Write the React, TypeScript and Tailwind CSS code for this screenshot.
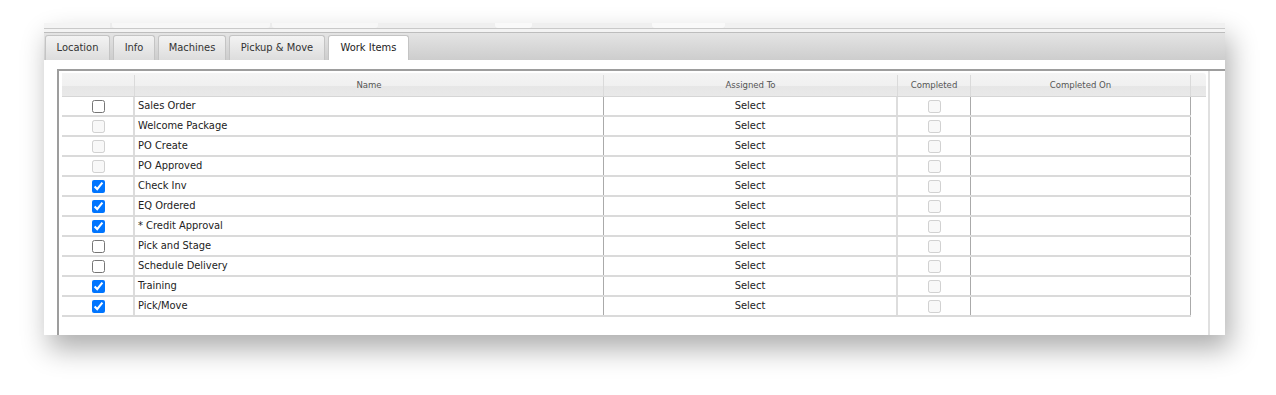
import React from "react";

type Row = { name: string; state: "on" | "off" | "disabled" };

const rows: Row[] = [
  { name: "Sales Order", state: "off" },
  { name: "Welcome Package", state: "disabled" },
  { name: "PO Create", state: "disabled" },
  { name: "PO Approved", state: "disabled" },
  { name: "Check Inv", state: "on" },
  { name: "EQ Ordered", state: "on" },
  { name: "* Credit Approval", state: "on" },
  { name: "Pick and Stage", state: "off" },
  { name: "Schedule Delivery", state: "off" },
  { name: "Training", state: "on" },
  { name: "Pick/Move", state: "on" },
];

const tabs = [
  { label: "Location", w: "w-[65px]" },
  { label: "Info", w: "w-[42px]" },
  { label: "Machines", w: "w-[68px]" },
  { label: "Pickup & Move", w: "w-[96px]" },
];

const App = () => {
  return (
    <div className="w-[1276px] h-[395px] bg-white overflow-hidden pt-[23px] pl-[44px] font-['DejaVu_Sans_Condensed','Liberation_Sans',sans-serif] text-[#222]">
      <div className="w-[1181px] h-[312px] flex flex-col overflow-hidden bg-white shadow-[5px_14px_26px_rgba(0,0,0,0.32)]">
        {/* remnant of the tab row above */}
        <div className="h-[5px] flex bg-[#ececec]">
          <div className="w-[66px] bg-[#f4f4f4]" />
          <div className="w-[2px]" />
          <div className="w-[158px] bg-[#f7f7f7] rounded-b-[3px]" />
          <div className="w-[2px]" />
          <div className="w-[106px] bg-[#f7f7f7] rounded-b-[3px]" />
          <div className="w-[117px] bg-[#efefef]" />
          <div className="w-[37px] bg-[#f9f9f9] rounded-b-[3px]" />
          <div className="w-[120px] bg-[#efefef]" />
          <div className="w-[73px] bg-[#f9f9f9] rounded-b-[3px]" />
          <div className="flex-1 bg-[#f1f1f1]" />
        </div>
        <div className="h-[4px] border-t border-[#c9c9c9] bg-[#f3f3f3]" />
        {/* tab strip */}
        <div className="h-[28px] border-t border-[#bdbdbd] bg-[linear-gradient(#e4e4e4,#cdcdcd)] flex items-end gap-[3px] pl-[1px]">
          {tabs.map((t) => (
            <div
              key={t.label}
              className={`${t.w} h-[25px] flex items-center justify-center text-[11px] text-[#333] border border-b-0 border-[#c4c4c4] rounded-t-[3px] bg-[linear-gradient(#f3f3f3,#dddddd)]`}
            >
              {t.label}
            </div>
          ))}
          <div className="w-[81px] h-[26px] -mb-px flex items-center justify-center text-[11px] text-[#222] border border-b-0 border-[#c4c4c4] rounded-t-[3px] bg-white">
            Work Items
          </div>
        </div>
        {/* content */}
        <div className="flex-1 flex flex-col pl-[13px] pt-[9px] bg-white">
          <div className="flex-1 flex border-t-2 border-l-2 border-[#9d9d9d]">
            <div className="w-[1151px] pl-[3px] pt-[2px] pr-[2px] border-r-2 border-[#e0e0e0]">
              {/* header */}
              <div className="flex h-[24px] pt-[2px] border-b border-[#d6d6d6] rounded-tr-[3px] bg-[linear-gradient(#f4f4f4_0%,#f0f0f0_55%,#e6e6e6_56%,#e9e9e9_100%)] text-[9.5px] text-[#555]">
                <div className="w-[73px] border-r border-[#dadada]" />
                <div className="w-[469px] border-r border-[#dadada] flex items-center justify-center">Name</div>
                <div className="w-[294px] border-r border-[#dadada] flex items-center justify-center">Assigned To</div>
                <div className="w-[73px] border-r border-[#dadada] flex items-center justify-center">Completed</div>
                <div className="w-[220px] border-r border-[#dadada] flex items-center justify-center">Completed On</div>
                <div className="flex-1" />
              </div>
              {/* body */}
              {rows.map((r) => (
                <div key={r.name} className="flex h-[20px] w-[1129px] border-b-2 border-[#dadada] text-[11px]">
                  <div className="w-[73px] border-r-2 border-[#dcdcdc] flex items-center justify-center pl-[1px]">
                    <input
                      type="checkbox"
                      className="m-0 w-[13px] h-[13px]"
                      checked={r.state === "on"}
                      disabled={r.state === "disabled"}
                      readOnly
                    />
                  </div>
                  <div className="w-[469px] border-r border-[#aaaaaa] flex items-center pl-[3px] pt-[1px]">{r.name}</div>
                  <div className="w-[294px] border-r-2 border-[#dddddd] flex items-center justify-center pt-[1px]">Select</div>
                  <div className="w-[73px] border-r border-[#aaaaaa] flex items-center justify-center">
                    <input type="checkbox" className="m-0 w-[13px] h-[13px]" disabled readOnly />
                  </div>
                  <div className="w-[220px] border-r border-[#aaaaaa]" />
                </div>
              ))}
            </div>
          </div>
        </div>
      </div>
    </div>
  );
};

export default App;
